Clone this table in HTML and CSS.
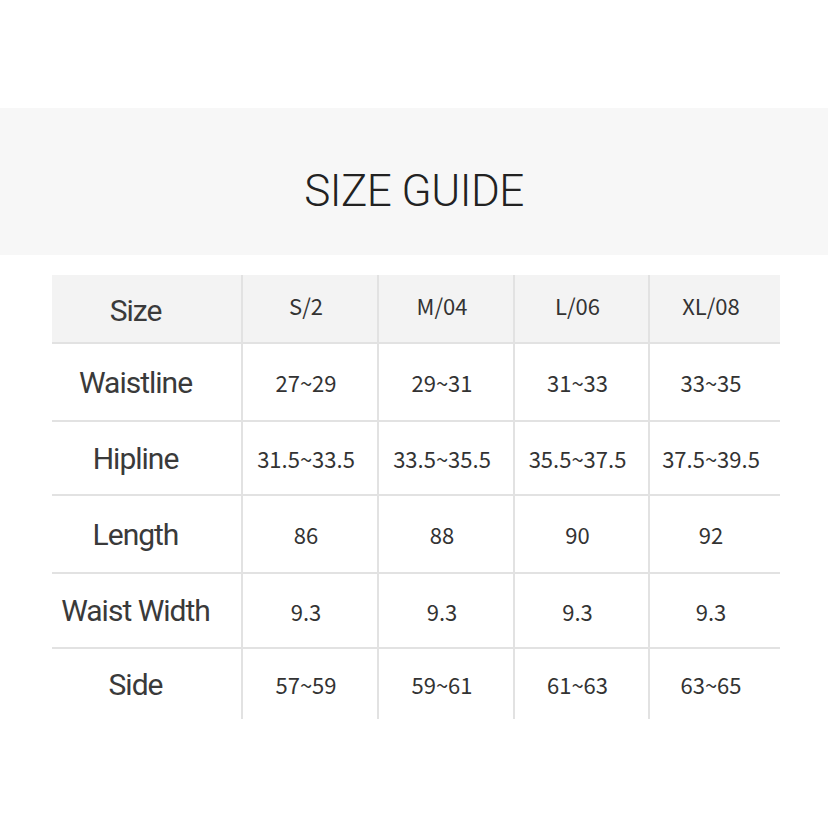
FILE: index.html
```html
<!DOCTYPE html>
<html>
<head>
<meta charset="utf-8">
<link rel="stylesheet" href="styles.css">
</head>
<body>
<div class="page">
  <div class="band"><h1 class="title">SIZE GUIDE</h1></div>
  <div class="table">
    <div class="cell head label">Size</div>
    <div class="cell head val">S/2</div>
    <div class="cell head val">M/04</div>
    <div class="cell head val">L/06</div>
    <div class="cell head val">XL/08</div>

    <div class="cell label">Waistline</div>
    <div class="cell val">27~29</div>
    <div class="cell val">29~31</div>
    <div class="cell val">31~33</div>
    <div class="cell val">33~35</div>

    <div class="cell label">Hipline</div>
    <div class="cell val">31.5~33.5</div>
    <div class="cell val">33.5~35.5</div>
    <div class="cell val">35.5~37.5</div>
    <div class="cell val">37.5~39.5</div>

    <div class="cell label">Length</div>
    <div class="cell val">86</div>
    <div class="cell val">88</div>
    <div class="cell val">90</div>
    <div class="cell val">92</div>

    <div class="cell label">Waist Width</div>
    <div class="cell val">9.3</div>
    <div class="cell val">9.3</div>
    <div class="cell val">9.3</div>
    <div class="cell val">9.3</div>

    <div class="cell label last">Side</div>
    <div class="cell val last">57~59</div>
    <div class="cell val last">59~61</div>
    <div class="cell val last">61~63</div>
    <div class="cell val last">63~65</div>
  </div>
</div>
</body>
</html>
```

FILE: styles.css
```css
html, body {
  margin: 0;
  padding: 0;
  background: #ffffff;
}
.page {
  width: 828px;
  height: 828px;
  padding-top: 108px;
  box-sizing: border-box;
}
.band {
  background: #f7f7f7;
  height: 147px;
  display: flex;
  align-items: center;
  justify-content: center;
  padding-top: 18px;
  box-sizing: border-box;
}
.title {
  margin: 0;
  font-family: "Roboto", "Liberation Sans", sans-serif;
  font-weight: 300;
  font-size: 44px;
  letter-spacing: -0.5px;
  color: #222222;
}
.table {
  margin: 20px 0 0 52px;
  width: 728px;
  display: grid;
  grid-template-columns: 189px 136px 136px 135px 132px;
  grid-template-rows: 69px 78px 74px 78px 75px 70px;
}
.cell {
  display: flex;
  align-items: center;
  justify-content: center;
  border-bottom: 2px solid #e2e2e2;
  border-left: 2px solid #e2e2e2;
  color: #333333;
  box-sizing: border-box;
}
.cell.label {
  border-left: none;
  padding-right: 22px;
  font-family: "Roboto", "Liberation Sans", sans-serif;
  font-size: 30px;
  letter-spacing: -1px;
  color: #3a3a3a;
}
.cell.val {
  padding-right: 8px;
  font-family: "Noto Sans CJK SC", "Noto Sans", sans-serif;
  font-size: 22px;
}
.cell.head {
  background: #f3f3f3;
}
.cell.head.val {
  padding-bottom: 8px;
}
.cell.head.label {
  padding-top: 4px;
}
.cell.last {
  border-bottom: none;
}
```
